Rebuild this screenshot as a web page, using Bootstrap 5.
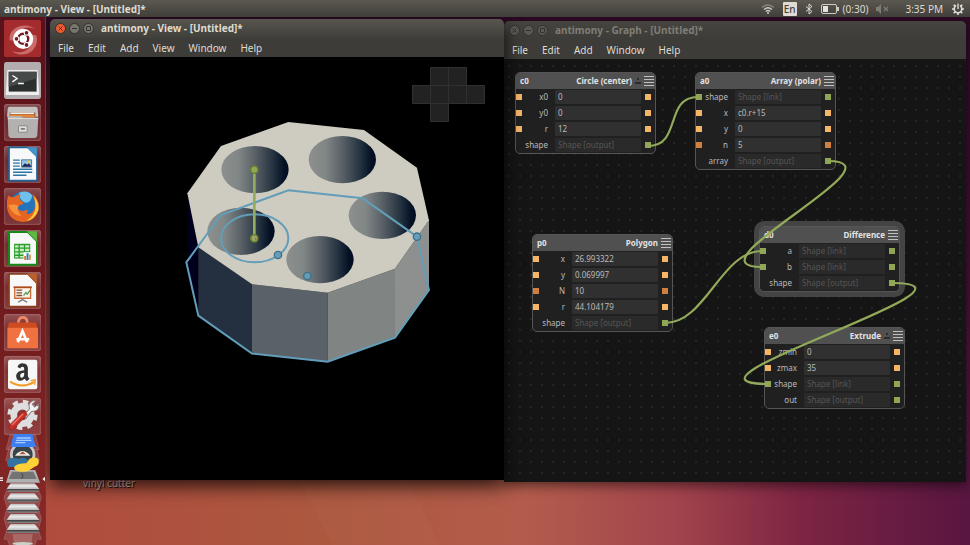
<!DOCTYPE html>
<html lang="en">
<head>
<meta charset="utf-8">
<meta name="viewport" content="width=device-width, initial-scale=1">
<title>antimony</title>
<link rel="stylesheet" href="https://cdn.jsdelivr.net/npm/bootstrap@5.3.0/dist/css/bootstrap.min.css">
<style>
body { font-family: "Noto Sans", "Open Sans", sans-serif; font-size: 10px; line-height: 16px; color: #dfdbd2; background: #2c0a24; }
button { font: inherit; color: inherit; background: none; border: 0; padding: 0; }
svg { display: block; }
.panel { height: 17px; padding: 0 5px 0 4px; background: linear-gradient(#5b584f, #403f3a); }
.panel .app-title { font-weight: 700; }
.lang { width: 14px; height: 14px; line-height: 14px; border-radius: 1px; background: #dfdbd2; color: #45423b; font-weight: 500; }
.muted-sound { margin-right: 16px; }
.launcher { width: 46px; padding: 3px 0 0 4px; gap: 5px; background: linear-gradient(#59121a, #6a181c 45%, #7e2323 80%, #862a29); border-right: 1px solid #7a323a; }
.tile { width: 37px; height: 37px; border-radius: 3px; background: linear-gradient(#ffffff3c, #ffffff16 40%, #ffffff24); box-shadow: inset 0 0 2px #ffffff70; flex: none; }
.stack { margin-top: -6px; margin-left: -4px; }
.desk { padding: 2px 4px 0 4px; background:
  linear-gradient(#2c0a24 0, #2c0a2400 470px),
  linear-gradient(63deg, #ffffff00 24%, #ffffff04 24% 33%, #ffffff00 33%),
  linear-gradient(90deg, #b04c3e, #ac583f 30%, #b35c4c 52%, #a2444c 68%, #7c2443 82%, #581640); }
.windows { height: calc(100% - 65px); }
.win { border-radius: 5px 5px 0 0; min-width: 0; }
.win-view { flex: 454 1 0; z-index: 2; box-shadow: 0 6px 18px #000000c8; }
.win-graph { flex: 462 1 0; margin-top: 2px; margin-bottom: -2px; box-shadow: 0 4px 12px #00000080; }
.titlebar { height: 19px; padding-left: 5px; gap: 3px; border-radius: 5px 5px 0 0; background: linear-gradient(#57554d, #403f3a); font-weight: 700; }
.win-graph .titlebar { background: linear-gradient(#45443f, #3d3c38); color: #807d76; }
.titlebar h1 { font-size: 10px; line-height: 19px; font-weight: 700; margin: 0 0 0 4px; }
.ctl { width: 11px; height: 11px; border-radius: 50%; background: #77756d; border: 1px solid #33322e; }
.ctl.shut { background: #ef5b2f; }
.win-graph .ctl { background: #5a5953; }
.menus { height: 19px; padding-left: 8px; gap: 14px; background: #3d3c38; }
.scene { background: #000; min-height: 0; }
.graph { background: #151515 radial-gradient(circle at 5px 7px, #2a2a2a 0, #2a2a2a 0.6px, #15151500 1px) 0 0 / 11px 11px; overflow: hidden; }
.node { width: 141px; border: 1px solid #555; border-radius: 5px; background: #202020; font-size: 8px; }
.node.picked { box-shadow: 0 0 0 5px #444; }
.node header { height: 16px; padding: 0 1px 0 4px; gap: 3px; border-radius: 4px 4px 0 0; background: #505050; color: #e2e2e2; font-weight: 700; }
.field { height: 16px; }
.port { width: 6px; height: 6px; flex: none; background: #f4b566; }
.port.int { background: #cf8041; }
.port.shape { background: #8fa755; }
.field label { width: 26px; text-align: right; color: #bbb; white-space: nowrap; }
.field input { width: 86px; height: 14px; margin: 0 4px 0 7px; padding: 0 3px; border: 0; border-radius: 1px; background: #303030; color: #bbb; }
.field input::placeholder { color: #555; opacity: 1; }
.field input:placeholder-shown { background: #2a2a2a; }
.wires { pointer-events: none; }
.caption { margin: -5px 0 0 33px; color: #d8cdc6; text-shadow: 1px 1px 1px #000; }
</style>
<script src="https://cdn.jsdelivr.net/npm/bootstrap@5.3.0/dist/js/bootstrap.bundle.min.js"></script>
</head>
<body class="vh-100 d-flex flex-column overflow-hidden">

<header class="panel d-flex align-items-center flex-shrink-0">
  <span class="app-title me-auto">antimony - View - [Untitled]*</span>
  <div class="d-flex align-items-center">
    <svg class="me-2" width="14" height="12" viewBox="0 0 14 12" fill="none" stroke="#cfcbc2" stroke-width="1.300"><path d="M1 4.500Q7 -.500 13 4.500" stroke="#8a877f"/><path d="M3 6.500Q7 3 11 6.500M4.800 8.500Q7 6.500 9.200 8.500"/><circle cx="7" cy="10" r="1" fill="#cfcbc2" stroke="none"/></svg>
    <span class="lang text-center me-2">En</span>
    <svg class="me-2" width="8" height="12" viewBox="0 0 8 12" fill="none" stroke="#dfdbd2"><path d="M1 3.500L7 8.500L4 11V1L7 3.500L1 8.500"/></svg>
    <svg class="me-1" width="18" height="10" viewBox="0 0 18 10"><rect x=".5" y=".5" width="15" height="9" rx="1.500" fill="none" stroke="#cfcbc2"/><path d="M16 3h2v4h-2z" fill="#cfcbc2"/><path d="M2 2h5v6h-5z" fill="#e6e2d9"/></svg>
    <span class="me-2">(0:30)</span>
    <svg class="muted-sound" width="13" height="10" viewBox="0 0 13 10" fill="#7f7c74"><path d="M0 3h2l3-3v10l-3-3h-2z"/><path d="M8 3l4 4m0-4l-4 4" stroke="#7f7c74" stroke-width="1.200"/></svg>
    <span class="me-2">3:35 PM</span>
    <svg width="14" height="14" viewBox="-7 -7 14 14" fill="none" stroke="#dfdbd2"><circle r="3.800" stroke-width="1.700"/><path d="M3.500 0H6M-3.500 0H-6M0 3.500V6M2.600 2.600L4.300 4.300M-2.600 2.600L-4.300 4.300M2.600 -2.600L4.300 -4.300M-2.600 -2.600L-4.300 -4.300" stroke-width="1.600"/><path d="M0 -6V-1" stroke="#4a4842" stroke-width="3.600"/><path d="M0 -5.500V0" stroke-width="1.400"/></svg>
  </div>
</header>

<div class="d-flex flex-grow-1 overflow-hidden">
<nav class="launcher d-flex flex-column flex-shrink-0 overflow-hidden" aria-label="Launcher">
  <button class="tile" aria-label="Dash"><svg width="37" height="37" viewBox="0 0 110 110"><rect width="110" height="110" rx="9" fill="#a52c2e"/><path d="M17 60C10 20 70 0 98 32C75 12 35 25 32 62ZM96 45C108 90 60 120 24 92C60 106 88 82 84 44Z" fill="#e9a39c" opacity=".55"/><circle cx="57" cy="56" r="30" fill="#fff"/><circle cx="57" cy="56" r="15" fill="none" stroke="#6d1c24" stroke-width="7"/><g fill="#6d1c24" stroke="#fff" stroke-width="3"><circle cx="37" cy="56" r="7"/><circle cx="67" cy="38" r="7"/><circle cx="67" cy="74" r="7"/></g></svg></button>
  <button class="tile" aria-label="Terminal"><svg width="37" height="37" viewBox="0 0 110 110"><rect width="110" height="110" rx="9" fill="#b4adaf"/><path d="M10 24h90l5 74H5z" fill="#eee"/><path d="M14 29h83v59H14z" fill="#2b2f2e"/><path d="M14 29h83v20Q60 60 14 74z" fill="#464a48"/><path d="M25 40l14 9l-14 10M42 64h17" fill="none" stroke="#fff" stroke-width="4"/></svg></button>
  <button class="tile" aria-label="Files"><svg width="37" height="37" viewBox="0 0 110 110"><path d="M16 8h78q5 0 6 6l2 24H9l2-24q1-6 5-6z" fill="#c4c2c0"/><path d="M17 25h76v15H17z" fill="#774326"/><path d="M19 25h71v5H19z" fill="#eee"/><path d="M18 31h73v9H18z" fill="#e8863a"/><path d="M11 36h39l6 5h46l-3 52q-1 8-7 8H20q-6 0-7-8z" fill="#b3b1af"/><path d="M11 41h91v4H11z" fill="#dad8d6"/><rect x="43" y="65" width="26" height="19" rx="3" fill="#ddd" stroke="#888" stroke-width="3"/><path d="M50 74h12" stroke="#777" stroke-width="5"/></svg></button>
  <button class="tile" aria-label="Writer"><svg width="37" height="37" viewBox="0 0 110 110"><path d="M15 4h56l27 27v72H15z" fill="#f8f8f8" stroke="#1f6596" stroke-width="5"/><path d="M68 4h30v30z" fill="#4294cc"/><path d="M27 42h20M27 51h20M27 60h20M27 69h57M27 78h57M27 87h40" stroke="#2a76a8" stroke-width="4"/><path d="M52 41h30v22H52z" fill="#91c5e8" stroke="#244f70" stroke-width="2"/><path d="M53 62l9-11l7 5l5-5l8 11z" fill="#225"/><circle cx="74" cy="47" r="4" fill="#f5c33b"/></svg></button>
  <button class="tile" aria-label="Firefox"><svg width="37" height="37" viewBox="0 0 110 110"><circle cx="57" cy="54" r="43" fill="#2374bd"/><path d="M45 14Q70 4 84 22Q82 42 63 44Q45 36 45 14" fill="#6dc1ed"/><path d="M12 22Q20 28 30 27Q42 17 50 20Q44 28 49 37L58 43Q56 51 46 51Q38 56 44 65Q55 73 66 65Q77 67 66 76Q83 81 91 62Q96 40 83 18Q105 30 104 58Q98 99 57 101Q14 98 9 58Q7 37 12 22" fill="#e66520"/><path d="M88 24Q105 42 102 66Q91 94 66 98Q91 83 94 58Q95 39 88 24" fill="#fbc936"/><path d="M13 51Q24 80 52 84Q35 65 43 52Q28 47 13 51" fill="#f6923b"/></svg></button>
  <button class="tile" aria-label="Calc"><svg width="37" height="37" viewBox="0 0 110 110"><path d="M15 6h56l27 27v70H15z" fill="#f8f8f8" stroke="#168a19" stroke-width="6"/><path d="M68 4h30v30z" fill="#61b842"/><path d="M30 41h48v44H30z" fill="#2b9c2c"/><path d="M33 45h10v7H33zM47 45h12v7H47zM63 45h12v7H63zM33 56h10v7H33zM47 56h12v7H47zM63 56h12v7H63zM33 67h10v6H33zM47 67h12v6H47zM33 77h10v5H33zM47 77h12v5H47z" fill="#c9efc4"/><path d="M58 66h23v24H58z" fill="#fff"/><path d="M60 77h6v12h-6z" fill="#e37a2a"/><path d="M67 69h6v20h-6z" fill="#2f7fc0"/><path d="M74 73h6v16h-6z" fill="#db9c44"/></svg></button>
  <button class="tile" aria-label="Impress"><svg width="37" height="37" viewBox="0 0 110 110"><path d="M15 6h56l27 27v70H15z" fill="#f8f8f8" stroke="#8b3d17" stroke-width="5"/><path d="M68 4h30v30z" fill="#b9602c"/><path d="M32 46h47v32H32z" fill="#fff4e9" stroke="#cf6a36" stroke-width="4"/><path d="M28 45h55" stroke="#a74418" stroke-width="4"/><path d="M37 54h17M37 62h17M37 70h17" stroke="#7d4c36" stroke-width="4"/><path d="M58 70l7-9l4 5l8-11" fill="none" stroke="#4aa25c" stroke-width="4"/><path d="M55 79v4M42 90l13-8l14 8" stroke="#777" fill="none" stroke-width="4"/></svg></button>
  <button class="tile" aria-label="Software"><svg width="37" height="37" viewBox="0 0 110 110"><path d="M43 32V22Q46 10 56 10Q67 10 69 22V32" fill="none" stroke="#ed8a65" stroke-width="8"/><path d="M15 25h80l6 18H10z" fill="#cd4b20"/><path d="M10 41h91v61H10z" fill="#ef7240"/><path d="M41 84L55 51L69 84M37 75h38" fill="none" stroke="#fff" stroke-width="8"/></svg></button>
  <button class="tile" aria-label="Amazon"><svg width="37" height="37" viewBox="0 0 110 110"><rect x="12" y="11" width="87" height="88" rx="6" fill="#f7f7f7"/><path d="M40 33Q44 21 57 22Q72 22 71 39V60Q73 65 76 68L68 75L61 68Q50 78 39 70Q31 55 44 46Q51 43 60 42Q61 31 54 32Q49 32 49 37ZM60 50Q47 51 48 60Q51 68 58 62Q61 57 60 50" fill="#333" fill-rule="evenodd"/><path d="M18 76Q54 99 90 77" fill="none" stroke="#f39b25" stroke-width="6"/><path d="M79 73l14-2l-2 15" fill="none" stroke="#f39b25" stroke-width="4"/></svg></button>
  <button class="tile" aria-label="Settings"><svg width="37" height="37" viewBox="0 0 110 110"><circle cx="55" cy="50" r="26" fill="none" stroke="#dedede" stroke-width="20"/><circle cx="55" cy="50" r="39" fill="none" stroke="#dedede" stroke-width="12" stroke-dasharray="16 14.630"/><path d="M58 52L76 32Q70 16 84 9Q90 6 94 9L84 19L91 27L103 18Q106 34 92 39L82 40L65 60z" fill="#f2f2f2" stroke="#8a7a7a" stroke-width="3"/><path d="M14 83L54 42Q66 38 69 49L28 93Q14 99 14 83" fill="#c82e26" stroke="#8c2420" stroke-width="2"/><path d="M24 80L57 47" stroke="#ee756a" stroke-width="4"/></svg></button>
  <button class="stack" aria-label="More applications"><svg width="45" height="114" viewBox="0 0 135 342"><defs><linearGradient id="metal" x2="0" y2="1"><stop stop-color="#b5b5b5"/><stop offset=".3" stop-color="#ececec"/><stop offset=".65" stop-color="#bdbdbd"/><stop offset=".72" stop-color="#444"/><stop offset="1" stop-color="#8a8a8a"/></linearGradient></defs><g fill="#ffffff24" stroke="#ffffff38" stroke-width="2"><path d="M30 3h77l10 44H18zM28 37h82l8 42H17z"/><path d="M25 155h86l13 35l-9 32l9 32l-9 32l9 30h-13l-8 22H30l-8-22H12l9-30l-9-32l9-32l-9-32z"/></g><circle cx="68" cy="62" r="34" fill="#3a4346" stroke="#c8cac9" stroke-width="8"/><path d="M45 65q22-28 46 0z" fill="#f1eee8"/><path d="M58 61l10-9l10 9z" fill="#a65b41"/><path d="M41 0h56l10 39H32z" fill="#3c7ff1"/><path d="M50 12h42M48 19h46M46 26h30" stroke="#a9ccff" stroke-width="4"/><path d="M30 108h76l14 38H18z" fill="#b0b0b0"/><path d="M36 113h64l10 22H26z" fill="#747474"/><path d="M65 118l4 10l-5 6" stroke="#444" fill="none" stroke-width="3"/><path d="M23 76Q35 69 57 74Q72 68 83 77V88Q60 87 46 99H26Q17 86 23 76" fill="#34729f"/><path d="M45 96Q57 87 79 88L89 74Q106 67 115 75Q121 94 104 98L84 111Q60 117 47 109Q39 102 45 96" fill="#ffd139"/><g fill="url(#metal)"><path d="M32 148h72l14 17l-4 8H24l-4-8z"/><path d="M32 178h72l14 18l-4 9H24l-4-9z"/><path d="M32 209h72l14 18l-4 9H24l-4-9z"/><path d="M32 240h72l14 18l-4 9H24l-4-9z"/><path d="M32 270h72l14 18l-4 9H24l-4-9z"/></g><path d="M38 300h60l-3 28H41z" fill="#c9a09b60"/><ellipse cx="68" cy="329" rx="31" ry="5" fill="#c9d0ca"/><path d="M0 130h9v4H0zM0 137h9v4H0zM135 128v14l-8-7z" fill="#eee"/></svg></button>
</nav>

<main class="desk flex-grow-1 overflow-hidden">
  <div class="windows d-flex">

    <section class="win win-view d-flex flex-column position-relative">
      <div class="titlebar d-flex align-items-center">
        <button class="ctl shut" aria-label="Close"><svg width="9" height="9" viewBox="0 0 9 9" stroke="#6b2a16"><path d="M2.500 2.500l4 4m0-4l-4 4"/></svg></button>
        <button class="ctl" aria-label="Minimize"><svg width="9" height="9" viewBox="0 0 9 9" stroke="#33322e"><path d="M2 4.500h5"/></svg></button>
        <button class="ctl" aria-label="Maximize"><svg width="9" height="9" viewBox="0 0 9 9" stroke="#33322e" fill="none"><path d="M2.500 2.500h4v4h-4z"/></svg></button>
        <h1>antimony - View - [Untitled]*</h1>
      </div>
      <div class="menus d-flex align-items-center">
        <button>File</button><button>Edit</button><button>Add</button><button>View</button><button>Window</button><button>Help</button>
      </div>
      <div class="scene flex-grow-1">
        <svg width="100%" height="100%" viewBox="50 57 454 423" preserveAspectRatio="xMidYMid meet">
          <defs><linearGradient id="bore"><stop offset="0" stop-color="#8c908e"/><stop offset=".25" stop-color="#818786"/><stop offset=".5" stop-color="#596167"/><stop offset=".75" stop-color="#283542"/><stop offset=".93" stop-color="#041125"/><stop offset="1" stop-color="#000b1f"/></linearGradient></defs>
          <g fill="#222" stroke="#303030"><path d="M430.500 67.500h36v18h18v18h-36v18h-18v-18h-18v-18h18z"/><path d="M448.500 67.500v36M466.500 85.500v18M430.500 85.500h36M430.500 85.500v18h18" fill="none"/></g>
          <g transform="translate(175 110) scale(.3333)">
            <path d="M37 250L70 412V617L37 457z" fill="#00001c"/>
            <path d="M70 412L231 523V731L70 617z" fill="#243040"/>
            <path d="M231 523L458 548V755L231 731z" fill="#5a6169"/>
            <path d="M458 548L660 476V683L458 755z" fill="#808584"/>
            <path d="M660 476L762 331V540L660 683z" fill="#8d908e"/>
            <path d="M340 36L567 60L726 173L762 331L660 476L458 548L231 523L70 412L37 250L138 108z" fill="#cecbc0"/>
            <g fill="url(#bore)"><ellipse cx="240" cy="179" rx="101" ry="71"/><ellipse cx="502" cy="149" rx="101" ry="71"/><ellipse cx="622" cy="316" rx="101" ry="71"/><ellipse cx="435" cy="449" rx="101" ry="71"/><ellipse cx="198" cy="364" rx="101" ry="71"/></g>
            <g fill="none" stroke="#629db9" stroke-width="6"><path d="M340 241L563 265L726 380L762 540L660 683L458 755L231 731L70 617L34 457L138 315z"/><ellipse cx="239" cy="385" rx="101" ry="72"/></g>
            <path d="M238 179V385" stroke="#92ad5c" stroke-width="8"/>
            <g fill="#629db9" stroke="#416f86" stroke-width="4"><circle cx="726" cy="380" r="11"/><circle cx="309" cy="435" r="11"/><circle cx="397" cy="498" r="11"/></g>
            <g fill="#90a952" stroke="#687d36" stroke-width="4"><circle cx="238" cy="179" r="11"/><circle cx="238" cy="385" r="11"/></g>
            <path d="M234 381h5v8h-5z" fill="#8fb5b0"/><path d="M239 384h5v6h-5z" fill="#c95f3c"/>
          </g>
        </svg>
      </div>
    </section>

    <section class="win win-graph d-flex flex-column">
      <div class="titlebar d-flex align-items-center">
        <button class="ctl" aria-label="Close"><svg width="9" height="9" viewBox="0 0 9 9" stroke="#33322e"><path d="M2.500 2.500l4 4m0-4l-4 4"/></svg></button>
        <button class="ctl" aria-label="Minimize"><svg width="9" height="9" viewBox="0 0 9 9" stroke="#33322e"><path d="M2 4.500h5"/></svg></button>
        <button class="ctl" aria-label="Maximize"><svg width="9" height="9" viewBox="0 0 9 9" stroke="#33322e" fill="none"><path d="M2.500 2.500h4v4h-4z"/></svg></button>
        <h1>antimony - Graph - [Untitled]*</h1>
      </div>
      <div class="menus d-flex align-items-center">
        <button>File</button><button>Edit</button><button>Add</button><button>Window</button><button>Help</button>
      </div>
      <div class="graph flex-grow-1 position-relative" id="graph">
        <svg class="wires position-absolute top-0 start-0 z-1" width="462" height="423" viewBox="504 59 462 423" fill="none" stroke="#92aa59" stroke-width="2.200">
          <path d="M648 146C682 146 664 97 698 97"/>
          <path d="M828 161C908 161 682 267 762 267"/>
          <path d="M665 323C706 323 721 251 762 251"/>
          <path d="M892 283C1007 283 653 384 768 384"/>
        </svg>
      </div>
    </section>
  </div>
  <p class="caption">vinyl cutter</p>
</main>
</div>

<script>
// Each field: [name, value, port kind, has input port]; a value in brackets is an empty shape slot.
const nodes = [
  { id: "c0", title: "Circle (center)", x: 11, y: 13, toggle: true, fields: [["x0", "0", "", 1], ["y0", "0", "", 1], ["r", "12", "", 1], ["shape", "[output]", "shape", 0]] },
  { id: "a0", title: "Array (polar)", x: 191, y: 13, fields: [["shape", "[link]", "shape", 1], ["x", "c0.r+15", "", 1], ["y", "0", "", 1], ["n", "5", "int", 1], ["array", "[output]", "shape", 0]] },
  { id: "p0", title: "Polygon", x: 28, y: 175, fields: [["x", "26.993322", "", 1], ["y", "0.069997", "", 1], ["N", "10", "int", 1], ["r", "44.104179", "", 1], ["shape", "[output]", "shape", 0]] },
  { id: "d0", title: "Difference", x: 255, y: 167, picked: true, fields: [["a", "[link]", "shape", 1], ["b", "[link]", "shape", 1], ["shape", "[output]", "shape", 0]] },
  { id: "e0", title: "Extrude", x: 260, y: 268, toggle: true, fields: [["zmin", "0", "", 1], ["zmax", "35", "", 1], ["shape", "[link]", "shape", 1], ["out", "[output]", "shape", 0]] }
];
const toggle = '<svg width="6" height="8" viewBox="0 0 6 8" fill="#2c2c2c"><path d="M2 1h2v2h-2zM0 5h6v2h-6z"/></svg>';
const bars = '<svg width="10" height="10" viewBox="0 0 10 10" stroke="#c0c0c0"><path d="M0 .5h10M0 3.500h10M0 6.500h10M0 9.500h10"/></svg>';
const row = (id, [name, value, kind, input]) => {
  const slot = value.startsWith("[") ? `placeholder="Shape ${value}"` : `value="${value}"`;
  return `<div class="field d-flex align-items-center">
    <span class="port ${kind} ${input ? "" : "invisible"}"></span>
    <label for="${id}-${name}">${name}</label>
    <input type="text" id="${id}-${name}" ${slot}>
    <span class="port ${kind}"></span></div>`;
};
document.getElementById("graph").insertAdjacentHTML("afterbegin", nodes.map(n =>
  `<article class="node position-absolute ${n.picked ? "picked" : ""}" style="left:${n.x}px;top:${n.y}px">
    <header class="d-flex align-items-center"><span class="me-auto">${n.id}</span><span>${n.title}</span>
    ${n.toggle ? toggle : ""}<button aria-label="${n.id} menu">${bars}</button></header>
    ${n.fields.map(f => row(n.id, f)).join("")}</article>`).join(""));
</script>
</body>
</html>
